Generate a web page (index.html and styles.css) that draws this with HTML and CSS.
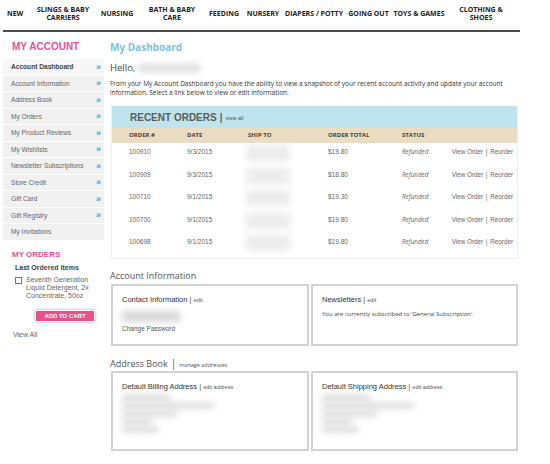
FILE: index.html
```html
<!DOCTYPE html>
<html>
<head>
<meta charset="utf-8">
<link rel="stylesheet" href="styles.css">
</head>
<body>
<div class="page">
  <nav class="topnav">
    <a class="nav-item w-new">NEW</a>
    <a class="nav-item w-slings">SLINGS &amp; BABY<br>CARRIERS</a>
    <a class="nav-item w-nursing">NURSING</a>
    <a class="nav-item w-bath">BATH &amp; BABY<br>CARE</a>
    <a class="nav-item w-feeding">FEEDING</a>
    <a class="nav-item w-nursery">NURSERY</a>
    <a class="nav-item w-diapers">DIAPERS / POTTY</a>
    <a class="nav-item w-going">GOING OUT</a>
    <a class="nav-item w-toys">TOYS &amp; GAMES</a>
    <a class="nav-item w-cloth">CLOTHING &amp;<br>SHOES</a>
  </nav>
  <div class="layout">
    <aside class="sidebar">
      <h2 class="side-title">MY ACCOUNT</h2>
      <ul class="menu">
        <li class="menu-item active"><span>Account Dashboard</span><i>»</i></li>
        <li class="menu-item"><span>Account Information</span><i>»</i></li>
        <li class="menu-item"><span>Address Book</span><i>»</i></li>
        <li class="menu-item"><span>My Orders</span><i>»</i></li>
        <li class="menu-item"><span>My Product Reviews</span><i>»</i></li>
        <li class="menu-item"><span>My Wishlists</span><i>»</i></li>
        <li class="menu-item"><span>Newsletter Subscriptions</span><i>»</i></li>
        <li class="menu-item"><span>Store Credit</span><i>»</i></li>
        <li class="menu-item"><span>Gift Card</span><i>»</i></li>
        <li class="menu-item"><span>Gift Registry</span><i>»</i></li>
        <li class="menu-item"><span>My Invitations</span></li>
      </ul>
      <h2 class="side-title orders-title">MY ORDERS</h2>
      <div class="last-title">Last Ordered Items</div>
      <div class="last-item">
        <span class="checkbox"></span>
        <span class="last-name">Seventh Generation Liquid Detergent, 2x Concentrate, 50oz</span>
      </div>
      <div class="btn-wrap"><button class="add-btn">ADD TO CART</button></div>
      <div class="view-all">View All</div>
    </aside>
    <main class="main">
      <h1 class="dash-title">My Dashboard</h1>
      <div class="hello">Hello, <span class="blur blur-name"></span></div>
      <p class="intro">From your My Account Dashboard you have the ability to view a snapshot of your recent account activity and update your account information. Select a link below to view or edit information.</p>

      <section class="orders">
        <div class="orders-head"><span class="orders-title-main">RECENT ORDERS</span><span class="sep">|</span><a class="small-link">view all</a></div>
        <div class="orow ohead">
          <span>ORDER #</span><span>DATE</span><span>SHIP TO</span><span>ORDER TOTAL</span><span>STATUS</span><span></span>
        </div>
        <div class="orow">
          <span>100910</span><span>9/3/2015</span><span class="ship"><i class="blur blur-ship"></i></span><span>$19.80</span><em>Refunded</em><span class="acts">View Order <b>|</b> Reorder</span>
        </div>
        <div class="orow">
          <span>100909</span><span>9/3/2015</span><span class="ship"><i class="blur blur-ship"></i></span><span>$18.80</span><em>Refunded</em><span class="acts">View Order <b>|</b> Reorder</span>
        </div>
        <div class="orow">
          <span>100710</span><span>9/1/2015</span><span class="ship"><i class="blur blur-ship"></i></span><span>$19.30</span><em>Refunded</em><span class="acts">View Order <b>|</b> Reorder</span>
        </div>
        <div class="orow">
          <span>100700</span><span>9/1/2015</span><span class="ship"><i class="blur blur-ship"></i></span><span>$19.80</span><em>Refunded</em><span class="acts">View Order <b>|</b> Reorder</span>
        </div>
        <div class="orow">
          <span>100698</span><span>9/1/2015</span><span class="ship"><i class="blur blur-ship"></i></span><span>$19.80</span><em>Refunded</em><span class="acts">View Order <b>|</b> Reorder</span>
        </div>
      </section>

      <h3 class="sec-title">Account Information</h3>
      <div class="boxes">
        <div class="box box-short">
          <div class="box-title">Contact Information <span class="sep2">|</span> <a class="small-link">edit</a></div>
          <div class="blur blur-contact"></div>
          <div class="box-link">Change Password</div>
        </div>
        <div class="box box-short">
          <div class="box-title">Newsletters <span class="sep2">|</span> <a class="small-link">edit</a></div>
          <p class="box-text">You are currently subscribed to 'General Subscription'.</p>
        </div>
      </div>

      <h3 class="sec-title">Address Book <span class="sep3">|</span> <a class="small-link">manage addresses</a></h3>
      <div class="boxes">
        <div class="box box-tall">
          <div class="box-title">Default Billing Address <span class="sep2">|</span> <a class="small-link">edit address</a></div>
          <div class="addr">
            <i class="blur al1"></i><i class="blur al2"></i><i class="blur al3"></i><i class="blur al4"></i><i class="blur al5"></i>
          </div>
        </div>
        <div class="box box-tall">
          <div class="box-title">Default Shipping Address <span class="sep2">|</span> <a class="small-link">edit address</a></div>
          <div class="addr">
            <i class="blur al1"></i><i class="blur al2"></i><i class="blur al3"></i><i class="blur al4"></i><i class="blur al5"></i>
          </div>
        </div>
      </div>
    </main>
  </div>
</div>
</body>
</html>
```
FILE: styles.css
```css
* { box-sizing: border-box; }
html, body { margin: 0; padding: 0; background: #fff; }
body { font-family: "Liberation Sans", Arial, sans-serif; color: #555; width: 550px; height: 464px; overflow: hidden; }
.page { width: 550px; }
a { text-decoration: none; color: inherit; }

.topnav {
  display: flex;
  align-items: center;
  height: 32px;
  margin: 0 30px 0 3px;
  border-bottom: 2px solid #4a4a4a;
  font-family: "Open Sans", sans-serif;
  font-weight: 700;
  font-size: 7px;
  line-height: 8px;
  color: #222;
  padding-bottom: 3px;
}
.nav-item { text-align: center; display: block; }
.w-new { width: 28px; padding-left: 4px; text-align: left; }
.w-slings { width: 64px; }
.w-nursing { width: 44px; }
.w-bath { width: 66px; }
.w-feeding { width: 38px; }
.w-nursery { width: 40px; }
.w-diapers { width: 62px; }
.w-going { width: 47px; }
.w-toys { width: 54px; }
.w-cloth { width: 70px; }

.layout { display: flex; padding-left: 3px; }
.sidebar { width: 101px; flex: none; }
.side-title {
  margin: 0;
  padding: 9px 0 0 9px;
  height: 23px;
  font-size: 10px;
  line-height: 12px;
  font-weight: 700;
  color: #ea4f95;
}
.menu { list-style: none; margin: 3px 0 0; padding: 0; }
.menu-item {
  display: flex;
  justify-content: space-between;
  align-items: center;
  height: 16.5px;
  padding: 0 3px 0 8px;
  background: #f1f1f1;
  border-top: 1px solid #fff;
  font-size: 6.6px;
  color: #666;
}
.menu-item.active { font-weight: 700; color: #444; background: #f7f7f7; }
.menu-item i { font-style: normal; color: #3aa3dd; font-size: 9px; font-weight: 700; line-height: 8px; }
.orders-title { padding-top: 9px; height: 24px; font-size: 8px; }
.last-title { font-size: 7px; font-weight: 700; color: #444; padding-left: 12px; height: 12px; }
.last-item { display: flex; padding-left: 12px; gap: 4px; }
.checkbox { width: 7px; height: 7px; border: 1px solid #777; flex: none; margin-top: 1px; }
.last-name { font-size: 7px; line-height: 8px; color: #666; width: 66px; }
.btn-wrap { padding: 10px 0 0 32px; }
.add-btn {
  width: 60px;
  height: 12px;
  padding: 0;
  border: 1px solid #fff;
  background: #e9508c;
  color: #fff;
  font-family: "Liberation Sans", Arial, sans-serif;
  font-size: 6px;
  font-weight: 700;
  box-shadow: 0 0 3px rgba(0,0,0,0.35);
  display: block;
}
.view-all { font-size: 7px; color: #666; padding: 9px 0 0 10px; }

.main { width: 408px; margin-left: 6px; }
.dash-title {
  margin: 0;
  padding-top: 8px;
  height: 30px;
  font-family: "Open Sans", sans-serif;
  font-size: 10px;
  line-height: 14px;
  font-weight: 700;
  color: #7cc2e0;
}
.hello { font-family: "Open Sans", sans-serif; font-size: 9.5px; color: #444; height: 11px; line-height: 11px; display: flex; align-items: center; gap: 3px; }
.blur { display: block; background: #cfcfcf; filter: blur(3px); }
.blur-name { width: 62px; height: 8px; background: #ddd; }
.intro {
  margin: 6px 0 0;
  font-family: "Open Sans", sans-serif;
  font-size: 6.5px;
  line-height: 9px;
  color: #333;
  height: 27px;
}

.orders { margin-left: 1px; border: 1px solid #eee; border-top: none; padding-bottom: 2px; }
.orders-head {
  background: #bfe4ed;
  height: 22px;
  display: flex;
  align-items: center;
  padding: 1px 0 0 18px;
  color: #555;
}
.orders-title-main { font-size: 10px; font-weight: 700; color: #5b5b5b; }
.sep { font-size: 10px; margin: 0 3px 0 3px; color: #666; font-weight: 700; }
.small-link { font-size: 5.5px; color: #555; }
.orow {
  display: grid;
  grid-template-columns: 58px 61px 80px 74px 49px 1fr;
  height: 22.5px;
  padding: 4px 4px 0 17px;
  font-size: 6.5px;
  line-height: 9px;
  color: #666;
}
.orow em { font-style: italic; font-family: "Open Sans", sans-serif; font-size: 6.3px; color: #666; }
.ohead {
  background: #e9dcc0;
  height: 15px;
  padding-top: 3px;
  font-family: "Open Sans", sans-serif;
  font-weight: 700;
  font-size: 6px;
  color: #444;
}
.ship { position: relative; }
.blur-ship { width: 44px; height: 16px; margin: -2px 0 0 -2px; background: #ececec; }
.acts { text-align: right; white-space: nowrap; font-size: 6.3px; }
.acts b { font-weight: 400; margin: 0 1px; }

.sec-title {
  margin: 0;
  padding-top: 10px;
  height: 25px;
  font-family: "Open Sans", sans-serif;
  font-weight: 400;
  font-size: 9px;
  color: #555;
  display: flex;
  align-items: baseline;
  gap: 3px;
}
.sep3 { font-size: 10px; }
.boxes { display: flex; gap: 2px; margin-left: 1px; }
.box {
  border: 2px solid #d2d2d2;
  background: #fff;
  padding: 9px 0 0 9px;
}
.box-short { height: 62px; }
.box-short:first-child { width: 198px; }
.box-short:last-child { width: 207px; }
.box-tall { height: 80px; }
.box-tall:first-child { width: 198px; }
.box-tall:last-child { width: 207px; }
.box-title { font-size: 7.5px; color: #333; height: 10px; line-height: 10px; }
.sep2 { color: #555; }
.blur-contact { width: 58px; height: 11px; margin-top: 6px; background: #d8d8d8; }
.box-link { font-size: 6.5px; color: #555; margin-top: 3px; }
.box-text { margin: 5px 0 0; font-family: "Open Sans", sans-serif; font-size: 6px; color: #444; }
.addr { padding-top: 3px; display: flex; flex-direction: column; gap: 3px; }
.addr .blur { height: 5px; background: #d4d4d4; }
.al1 { width: 48px; }
.al2 { width: 92px; }
.al3 { width: 55px; }
.al4 { width: 30px; }
.al5 { width: 36px; }
```
